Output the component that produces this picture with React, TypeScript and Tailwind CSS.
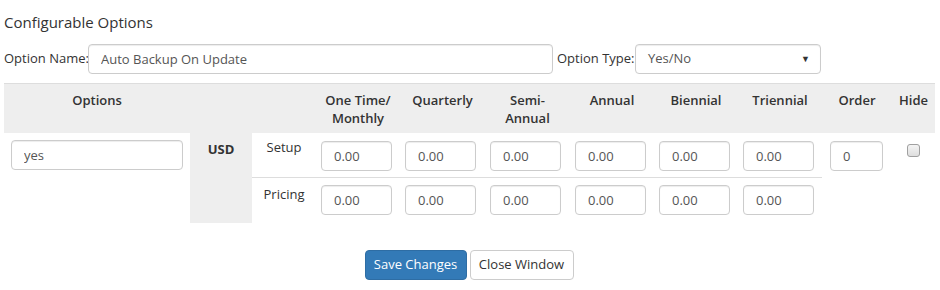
import React from "react";

const inputCls =
  "h-[30px] rounded-[4px] border border-[#ccc] bg-white px-[12px] text-[13px] text-[#555] shadow-[inset_0_1px_1px_rgba(0,0,0,0.075)] outline-none";

const periods = [
  ["One Time/", "Monthly"],
  ["Quarterly"],
  ["Semi-", "Annual"],
  ["Annual"],
  ["Biennial"],
  ["Triennial"],
];

export default function App() {
  return (
    <div
      className="w-[940px] h-[290px] bg-white px-[4px] text-[#333]"
      style={{ fontFamily: '"Open Sans", "Liberation Sans", sans-serif' }}
    >
      <div className="pt-[12px] text-[15px] leading-[20px] text-[#333]">Configurable Options</div>
      <div className="mt-[12px] flex items-center h-[30px]">
        <span className="text-[13px] w-[84px] shrink-0 whitespace-nowrap">Option Name:</span>
        <input className={inputCls + " w-[465px] shrink-0"} defaultValue="Auto Backup On Update" />
        <span className="text-[13px] ml-[4px] w-[78px] shrink-0 whitespace-nowrap">Option Type:</span>
        <div className={inputCls + " w-[186px] h-[29px] shrink-0 flex items-center justify-between pr-[10px]"}>
          <span>Yes/No</span>
          <span className="text-[9px] text-[#333]">▼</span>
        </div>
      </div>
      <table className="mt-[9px] table-fixed border-collapse w-[931px] text-[13px]">
        <colgroup>
          <col className="w-[186px]" />
          <col className="w-[62px]" />
          <col className="w-[64px]" />
          <col className="w-[84px]" />
          <col className="w-[85px]" />
          <col className="w-[85px]" />
          <col className="w-[84px]" />
          <col className="w-[84px]" />
          <col className="w-[84px]" />
          <col className="w-[70px]" />
          <col className="w-[43px]" />
        </colgroup>
        <thead>
          <tr className="bg-[#eeeeee] border-t border-[#dddddd] align-top">
            <th className="h-[49px] pt-[7px] font-semibold leading-[18px]">Options</th>
            <th></th>
            <th></th>
            {periods.map((p, i) => (
              <th key={i} className="pt-[7px] font-semibold leading-[18px]">
                {p.map((l, j) => (
                  <div key={j}>{l}</div>
                ))}
              </th>
            ))}
            <th className="pt-[7px] font-semibold leading-[18px]">Order</th>
            <th className="pt-[7px] font-semibold leading-[18px]">Hide</th>
          </tr>
        </thead>
        <tbody>
          <tr className="align-top">
            <td rowSpan={2} className="pt-[7px] pl-[7px] pr-[7px]">
              <input className={inputCls + " w-[172px]"} defaultValue="yes" />
            </td>
            <td rowSpan={2} className="bg-[#eeeeee] pt-[7px] text-center font-bold leading-[18px] h-[90px]">
              USD
            </td>
            <td className="pt-[5px] text-center leading-[18px] h-[45px]">Setup</td>
            {periods.map((_, i) => (
              <td key={i} className="pt-[8px] pl-[5px]">
                <input className={inputCls + " w-[71px]"} defaultValue="0.00" />
              </td>
            ))}
            <td rowSpan={2} className="pt-[8px] pl-[8px]">
              <input className={inputCls + " w-[53px]"} defaultValue="0" />
            </td>
            <td rowSpan={2} className="pt-[10px] text-center">
              <span className="inline-block w-[13px] h-[13px] rounded-[3px] border border-[#a0a0a0] bg-gradient-to-b from-[#f4f4f4] to-[#dedede]"></span>
            </td>
          </tr>
          <tr className="align-top">
            <td className="pt-[7px] text-center leading-[18px] border-t border-[#dddddd]">Pricing</td>
            {periods.map((_, i) => (
              <td key={i} className="pt-[7px] pl-[5px] border-t border-[#dddddd]">
                <input className={inputCls + " w-[71px]"} defaultValue="0.00" />
              </td>
            ))}
          </tr>
        </tbody>
      </table>
      <div className="mt-[27px] flex justify-center gap-[3px] pr-[8px]">
        <button className="h-[30px] w-[102px] rounded-[4px] border border-[#2e6da4] bg-[#337ab7] text-[13px] text-white ml-[6px]">
          Save Changes
        </button>
        <button className="h-[30px] w-[104px] rounded-[4px] border border-[#cccccc] bg-white text-[13px] text-[#333]">
          Close Window
        </button>
      </div>
    </div>
  );
}
